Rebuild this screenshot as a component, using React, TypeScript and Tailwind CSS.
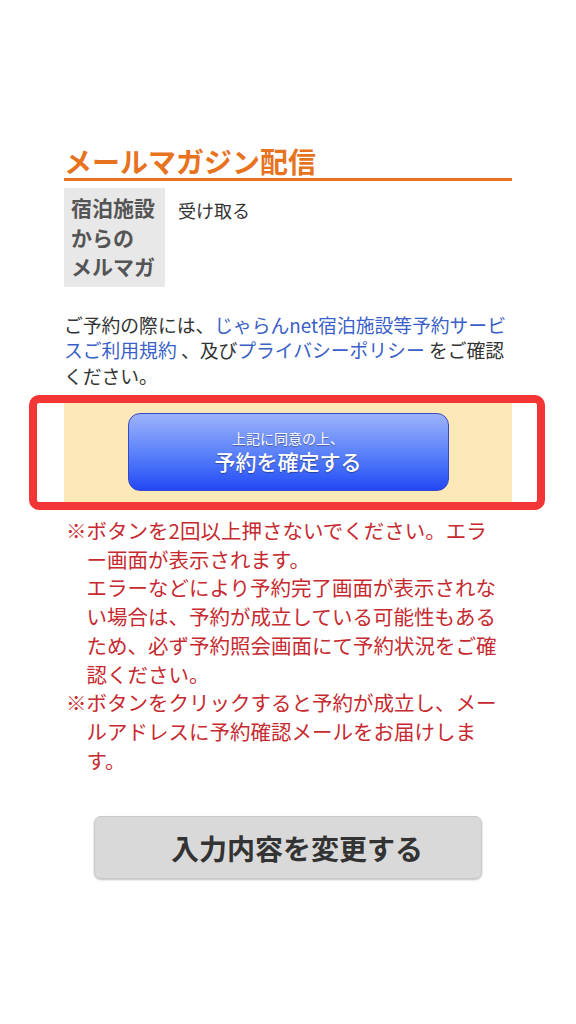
import React from 'react'

const font = { fontFamily: '"Noto Sans CJK JP", "Noto Sans", sans-serif' }

function Note({ children }: { children: React.ReactNode }) {
  return (
    <div className="flex">
      <span className="w-[20.5px] shrink-0">※</span>
      <div className="min-w-0 flex-1">{children}</div>
    </div>
  )
}

export default function App() {
  return (
    <div className="min-h-[1024px] w-full bg-white" style={font}>
      <div className="mx-auto w-[448px] pt-[144px] pb-10">
        <h2 className="border-b-[3px] border-[#e8731e] text-[28px] font-bold leading-[34px] text-[#e8731e]">
          メールマガジン配信
        </h2>

        <div className="mt-[7px] flex">
          <div className="w-[101px] shrink-0 bg-[#e8e8e8] px-[7px] py-[5px] text-[21px] font-bold leading-[29.5px] text-[#555]">
            宿泊施設<br />からの<br />メルマガ
          </div>
          <div className="pl-[13px] pt-[8px] text-[18px] leading-[29.5px] text-[#333]">受け取る</div>
        </div>

        <p className="mt-[25px] text-[18.8px] leading-[25.5px] text-[#333]">
          ご予約の際には、<span className="text-[#3a5fc8]">じゃらんnet宿泊施設等予約サービスご利用規約</span> 、及び
          <span className="text-[#3a5fc8]">プライバシーポリシー</span> をご確認ください。
        </p>

        <div className="mt-[7px] ml-[-35px] mr-[-33px] rounded-[10px] border-[8px] border-[#f23535] pl-[27px] pr-[25px]">
          <div className="flex justify-center bg-[#fde9b7] pt-[10px] pb-[11px]">
            <button className="flex h-[78px] w-[321px] flex-col items-center justify-center rounded-[12px] border border-[#3548c8] bg-gradient-to-b from-[#9db2fa] to-[#2446f5] text-white [text-shadow:0_1px_1px_rgba(0,0,0,0.35)]">
              <span className="text-[14px] leading-[18px]">上記に同意の上、</span>
              <span className="text-[21px] font-medium leading-[28px]">予約を確定する</span>
            </button>
          </div>
        </div>

        <div className="mt-[6px] pl-[2px] pr-[9px] text-[20.5px] leading-[28.7px] text-[#c62a30]">
          <Note>
            ボタンを2回以上押さないでください。エラー画面が表示されます。
            <br />
            エラーなどにより予約完了画面が表示されない場合は、予約が成立している可能性もあるため、必ず予約照会画面にて予約状況をご確認ください。
          </Note>
          <Note>ボタンをクリックすると予約が成立し、メールアドレスに予約確認メールをお届けします。</Note>
        </div>

        <div className="mt-[42px] flex justify-center">
          <button className="h-[63px] w-[388px] rounded-[7px] border border-[#c9c9c9] bg-[#d9d9d9] pl-[18px] text-[28px] font-bold text-[#333] shadow-[0_1px_2px_rgba(0,0,0,0.25)]">
            入力内容を変更する
          </button>
        </div>
      </div>
    </div>
  )
}
